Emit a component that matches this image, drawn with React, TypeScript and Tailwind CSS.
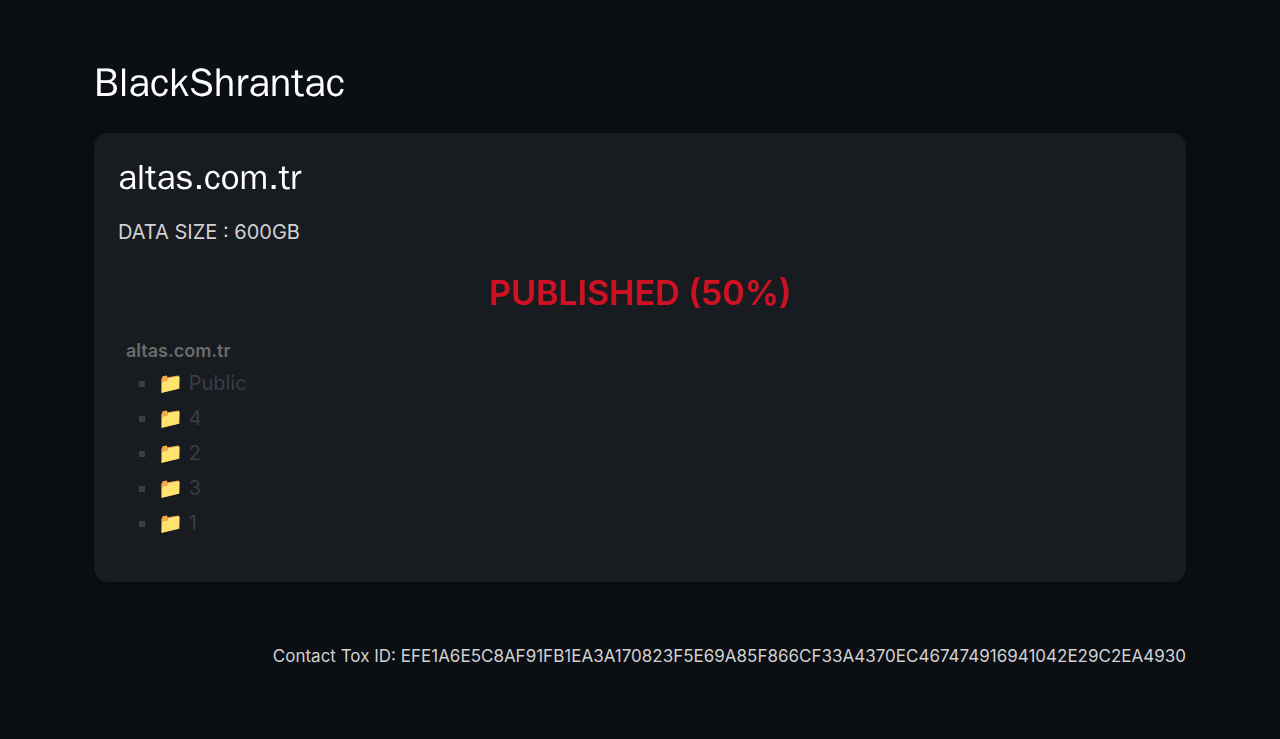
const folders = ['Public', '4', '2', '3', '1'];

const TOX_ID =
  'EFE1A6E5C8AF91FB1EA3A170823F5E69A85F866CF33A4370EC467474916941042E29C2EA4930';

function FolderList() {
  return (
    <div className="px-2">
      <h4 className="text-lg leading-7 font-semibold text-[#6b6b6b]">altas.com.tr</h4>
      <ul className="mt-px list-[square] pl-8 text-xl leading-[35px] text-[#393d46]">
        {folders.map((name) => (
          <li key={name}>
            <span aria-hidden="true">📁</span> {name}
          </li>
        ))}
      </ul>
    </div>
  );
}

export default function App() {
  return (
    <div className="min-h-screen bg-[#0b0e12] font-['Inter',sans-serif] text-[#d1d1d1]">
      <div className="mx-auto max-w-[1140px] px-6 py-14">
        <header>
          <h1 className="font-['WenQuanYi_Zen_Hei','Liberation_Sans',sans-serif] text-[40px] leading-[54px] text-white">
            BlackShrantac
          </h1>
        </header>

        <main className="mt-[23px] rounded-[14px] bg-[#181b1f] p-6 pb-[41px] shadow-[0_6px_24px_rgba(0,0,0,0.15)]">
          <h2 className="font-['WenQuanYi_Zen_Hei','Liberation_Sans',sans-serif] text-[35px] leading-10 text-white">
            altas.com.tr
          </h2>
          <p className="mt-5 text-xl leading-[30px]">DATA SIZE : 600GB</p>
          <p className="mt-[25px] mb-[23px] text-center text-[34px] leading-[42px] font-semibold text-[#d01124]">
            PUBLISHED (50%)
          </p>
          <FolderList />
        </main>

        <footer className="mt-[62px] text-right text-[17px] leading-6">
          Contact Tox ID: {TOX_ID}
        </footer>
      </div>
    </div>
  );
}
